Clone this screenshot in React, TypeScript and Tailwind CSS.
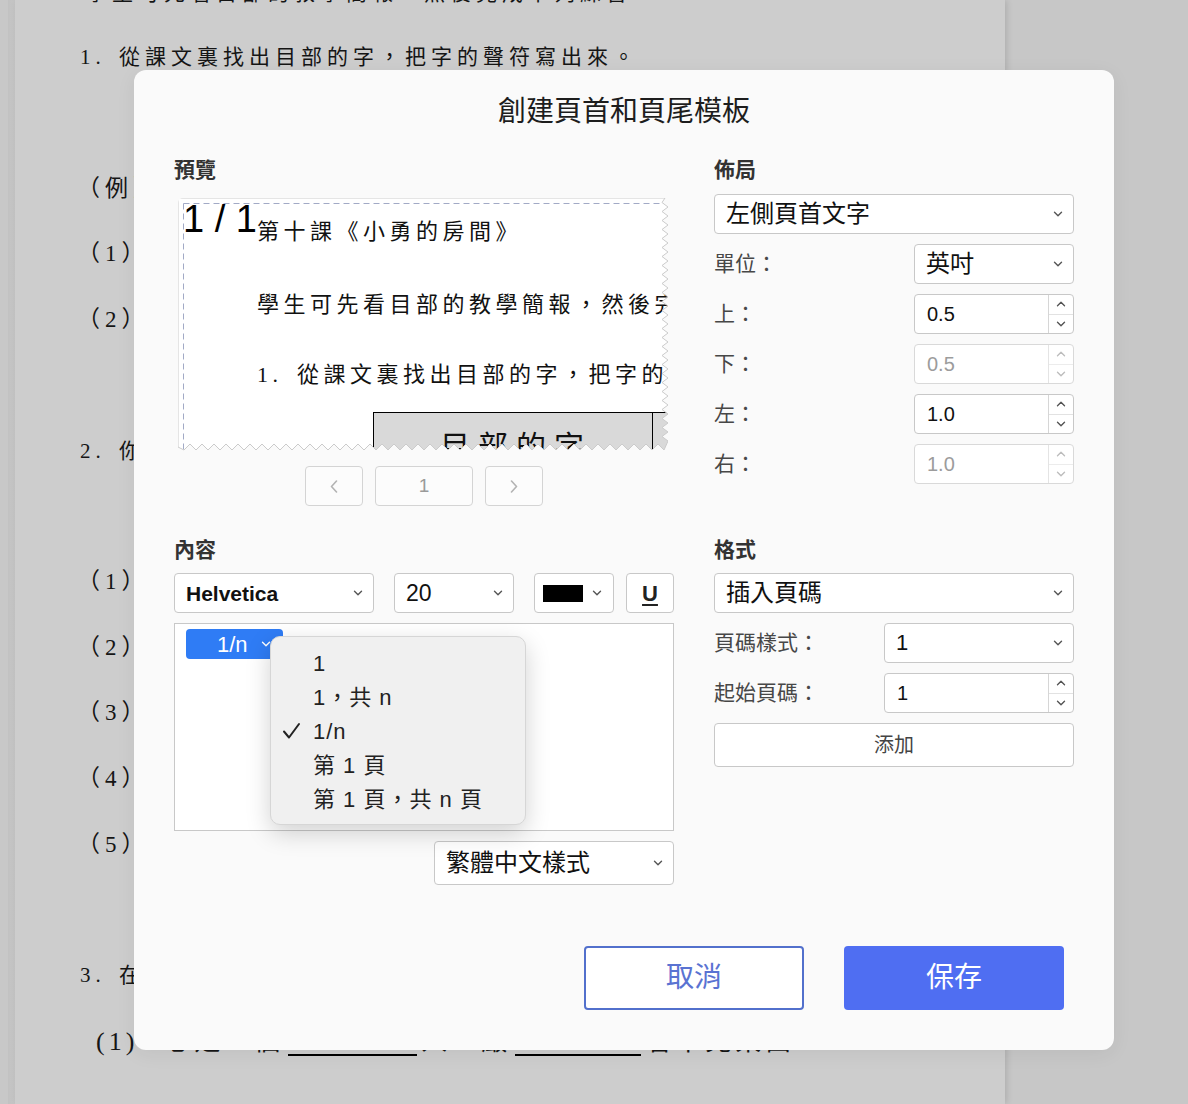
import React from 'react';

const UI = "font-['Liberation_Sans','Noto_Sans_CJK_TC',sans-serif]";
const SERIF = "font-['Liberation_Serif','Noto_Sans_CJK_TC',serif]";

const ChevronDown = ({ className = 'text-[#555]' }: { className?: string }) => (
  <svg width="10" height="6" viewBox="0 0 10 6" className={className}>
    <path d="M1.5 1.2 5 4.7l3.5-3.5" fill="none" stroke="currentColor" strokeWidth="1.4" strokeLinecap="round" strokeLinejoin="round" />
  </svg>
);

const ChevronUp = ({ className = 'text-[#555]' }: { className?: string }) => (
  <svg width="10" height="6" viewBox="0 0 10 6" className={className}>
    <path d="M1.5 4.8 5 1.3l3.5 3.5" fill="none" stroke="currentColor" strokeWidth="1.4" strokeLinecap="round" strokeLinejoin="round" />
  </svg>
);

const Select = ({ value, className = '', text = 'text-[24px]' }: { value: React.ReactNode; className?: string; text?: string }) => (
  <div className={`flex h-[40px] items-center justify-between rounded-[4px] border border-[#c8c8c8] bg-white pl-[11px] pr-[10px] ${className}`}>
    <span className={`${text} leading-none text-[#111]`}>{value}</span>
    <ChevronDown />
  </div>
);

const NumberField = ({ value, disabled = false, className = '' }: { value: string; disabled?: boolean; className?: string }) => (
  <div className={`flex h-[40px] overflow-hidden rounded-[4px] border bg-white ${disabled ? 'border-[#d9d9d9]' : 'border-[#c8c8c8]'} ${className}`}>
    <span className={`flex flex-1 items-center pl-[12px] text-[20px] ${disabled ? 'text-[#9c9c9c]' : 'text-[#111]'}`}>{value}</span>
    <div className={`flex w-[25px] flex-col border-l ${disabled ? 'border-[#e4e4e4]' : 'border-[#d6d6d6]'}`}>
      <div className="flex flex-1 items-center justify-center">
        <ChevronUp className={disabled ? 'text-[#bdbdbd]' : 'text-[#555]'} />
      </div>
      <div className={`flex flex-1 items-center justify-center border-t ${disabled ? 'border-[#ececec]' : 'border-[#e2e2e2]'}`}>
        <ChevronDown className={disabled ? 'text-[#bdbdbd]' : 'text-[#555]'} />
      </div>
    </div>
  </div>
);

const Row = ({ label, children }: { label: string; children: React.ReactNode }) => (
  <div className="mt-[10px] flex items-center justify-between">
    <span className="text-[21px] text-[#474747]">{label}</span>
    {children}
  </div>
);

const SectionLabel = ({ children }: { children: React.ReactNode }) => (
  <div className="h-[28px] text-[21px] font-semibold leading-[28px] text-[#333]">{children}</div>
);

// torn-paper edges of the preview page
const PW = 490;
const PH = 254;
const pagePoly = (() => {
  const pts: string[] = ['0,0', `${PW - 3},0`];
  let k = 1;
  for (let y = 4.5; y < PH - 10; y += 4.5, k++) pts.push(`${k % 2 ? PW - 6 : PW},${y}`);
  k = 0;
  for (let x = PW - 4; x > 0; x -= 6, k++) pts.push(`${x},${k % 2 ? PH - 8 : PH - 2}`);
  pts.push(`0,${PH - 5}`);
  return pts.join(' ');
})();

const PagePreview = () => (
  <div className={`relative ml-[4px] mt-[14px] h-[254px] w-[490px] overflow-hidden rounded-tl-[5px] bg-white ${SERIF}`}>
    <div className="absolute left-[5px] top-[2px] font-['Liberation_Sans',sans-serif] text-[38px] leading-none text-black">1 / 1</div>
    <div className="pl-[79px] pt-[20px] text-[22px] leading-[28px] tracking-[4.5px] whitespace-nowrap text-[#111]">
      <div>第十課《小勇的房間》</div>
      <div className="mt-[45px]">學生可先看目部的教學簡報，然後完成下列練習</div>
      <div className="mt-[42px]">
        <span className="inline-block w-[40px]">1.</span>從課文裏找出目部的字，把字的聲符寫出來
      </div>
      <div className="ml-[116px] mt-[23px] flex h-[60px] w-[480px] border-l border-t border-black bg-[#d9d9d9]">
        <div className="w-[279px] shrink-0 border-r border-black pl-[66px] pt-[19px] text-[30px] leading-[30px] tracking-[8px]">目部的字</div>
        <div className="w-[200px] shrink-0" />
      </div>
    </div>
    <svg className="absolute inset-0" width={PW} height={PH} viewBox={`0 0 ${PW} ${PH}`}>
      <path d={`M5.5 5.5H${PW}M5.5 5.5V${PH}`} stroke="#a2aac6" strokeWidth="1" strokeDasharray="6 4" fill="none" />
      <path d={`M0 0H${PW}V${PH}H0Z M${pagePoly.split(' ').join(' L')}Z`} fillRule="evenodd" fill="#fafafa" />
      <polygon points={pagePoly} fill="none" stroke="#cbcbcb" strokeWidth="1" />
    </svg>
  </div>
);

const PagerButton = ({ children, className = '' }: { children: React.ReactNode; className?: string }) => (
  <div className={`flex h-[40px] items-center justify-center rounded-[4px] border border-[#d4d4d4] bg-[#fcfcfc] text-[19px] text-[#9a9a9a] ${className}`}>
    {children}
  </div>
);

const formats = ['1', '1，共 n', '1/n', '第 1 頁', '第 1 頁，共 n 頁'];

const DocLine = ({ children, className = '' }: { children?: React.ReactNode; className?: string }) => (
  <div className={`flex h-[65.6px] items-center whitespace-nowrap ${className}`}>{children}</div>
);

const Num = ({ children }: { children: React.ReactNode }) => <span className="inline-block w-[39px]">{children}</span>;

const Blank = ({ w }: { w: string }) => <span className={`mx-[4px] inline-block h-[28px] border-b-2 border-black align-baseline ${w}`} />;

export default function App() {
  return (
    <div className={`relative flex h-[1104px] w-[1188px] overflow-hidden bg-[#c7c7c7] ${UI}`}>
      <div className="w-[8px] shrink-0 bg-[#c8c8c8]" />
      <div className="w-[7px] shrink-0 bg-gradient-to-r from-[#c2c2c2] to-[#c6c6c6]" />

      {/* worksheet page behind the dialog */}
      <div className={`w-[990px] shrink-0 bg-[#cdcdcd] pl-[65px] text-[21px] tracking-[5px] text-[#151515] shadow-[2px_0_6px_rgba(0,0,0,0.12)] ${SERIF}`}>
        <div className="-mt-[37px]">
          <DocLine className="!h-[62px] pl-[6px]">學生可先看目部的教學簡報，然後完成下列練習。</DocLine>
          <DocLine><Num>1.</Num>從課文裏找出目部的字，把字的聲符寫出來。</DocLine>
          <DocLine />
          <DocLine className="-ml-[3px] text-[23px]">（例）眼：艮</DocLine>
          <DocLine className="-ml-[3px] text-[23px]">（1）</DocLine>
          <DocLine className="-ml-[3px] text-[23px]">（2）</DocLine>
          <DocLine />
          <DocLine><Num>2.</Num>你能分辨下列的字嗎？</DocLine>
          <DocLine />
          <DocLine className="-ml-[3px] text-[23px]">（1）</DocLine>
          <DocLine className="-ml-[3px] text-[23px]">（2）</DocLine>
          <DocLine className="-ml-[3px] text-[23px]">（3）</DocLine>
          <DocLine className="-ml-[3px] text-[23px]">（4）</DocLine>
          <DocLine className="-ml-[3px] text-[23px]">（5）</DocLine>
          <DocLine />
          <DocLine><Num>3.</Num>在橫線上填上適當的字。</DocLine>
          <DocLine className="pl-[16px] text-[26px] tracking-[4px]">
            <span className="mr-[26px]">(1)</span>心是一個<Blank w="w-[129px]" />人，嚴<Blank w="w-[126px]" />看不見東西
          </DocLine>
        </div>
      </div>
      <div className="flex-1" />

      {/* dialog */}
      <div className="absolute left-[134px] top-[70px] h-[980px] w-[980px] rounded-[12px] bg-[#fafafa] px-[40px] shadow-[0_4px_20px_rgba(0,0,0,0.06)]">
        <div className="pt-[22px] text-center text-[28px] leading-[40px] text-[#1d1d1d]">創建頁首和頁尾模板</div>

        <div className="mt-[24px] grid grid-cols-[500px_360px] gap-x-[40px] gap-y-[30px]">
          {/* preview */}
          <div>
            <SectionLabel>預覽</SectionLabel>
            <PagePreview />
            <div className="mt-[14px] flex justify-center gap-[12px]">
              <PagerButton className="w-[58px]">
                <svg width="8" height="13" viewBox="0 0 8 13"><path d="M6.5 1 1.5 6.5l5 5.5" fill="none" stroke="#b3b3b3" strokeWidth="1.6" strokeLinecap="round" strokeLinejoin="round" /></svg>
              </PagerButton>
              <PagerButton className="w-[98px]">1</PagerButton>
              <PagerButton className="w-[58px]">
                <svg width="8" height="13" viewBox="0 0 8 13"><path d="M1.5 1l5 5.5-5 5.5" fill="none" stroke="#b3b3b3" strokeWidth="1.6" strokeLinecap="round" strokeLinejoin="round" /></svg>
              </PagerButton>
            </div>
          </div>

          {/* layout */}
          <div>
            <SectionLabel>佈局</SectionLabel>
            <Select value="左側頁首文字" className="mt-[10px]" />
            <Row label="單位：">
              <Select value="英吋" className="w-[160px]" />
            </Row>
            <Row label="上：">
              <NumberField value="0.5" className="w-[160px]" />
            </Row>
            <Row label="下：">
              <NumberField value="0.5" disabled className="w-[160px]" />
            </Row>
            <Row label="左：">
              <NumberField value="1.0" className="w-[160px]" />
            </Row>
            <Row label="右：">
              <NumberField value="1.0" disabled className="w-[160px]" />
            </Row>
          </div>

          {/* content */}
          <div>
            <SectionLabel>內容</SectionLabel>
            <div className="mt-[9px] flex">
              <Select value="Helvetica" text="text-[21px] font-semibold" className="w-[200px]" />
              <Select value="20" text="text-[23px]" className="ml-[20px] w-[120px]" />
              <div className="ml-[20px] flex h-[40px] w-[80px] items-center rounded-[4px] border border-[#c8c8c8] bg-white pl-[8px]">
                <span className="h-[17px] w-[40px] bg-black" />
                <ChevronDown className="ml-[9px] text-[#555]" />
              </div>
              <div className="ml-[12px] flex h-[40px] w-[48px] items-center justify-center rounded-[4px] border border-[#c8c8c8] bg-white text-[22px] font-semibold text-[#222] underline underline-offset-[3px]">
                U
              </div>
            </div>
            <div className="relative mt-[10px] h-[208px] border border-[#c8c8c8] bg-white">
              <div className="ml-[11px] mt-[5px] flex h-[30px] w-[97px] items-center rounded-[4px] bg-[#2f7cf5] pl-[31px] text-[22px] text-white">
                1/n
                <ChevronDown className="ml-[13px] text-white" />
              </div>
              <div className="absolute left-[95px] top-[12px] w-[256px] rounded-[10px] border border-[#d6d6d6] bg-[#f0f0f0] pb-[8px] pt-[9px] shadow-[0_8px_24px_rgba(0,0,0,0.18)]">
                {formats.map((f) => (
                  <div key={f} className="relative flex h-[34px] items-center pl-[42px] text-[22px] tracking-[1px] text-[#222]">
                    {f === '1/n' && (
                      <svg className="absolute left-[11px] top-[8px]" width="19" height="18" viewBox="0 0 19 18">
                        <path d="M2 9.5 7 15.5 17 2" fill="none" stroke="#222" strokeWidth="2" strokeLinecap="round" strokeLinejoin="round" />
                      </svg>
                    )}
                    {f}
                  </div>
                ))}
              </div>
            </div>
            <Select value="繁體中文樣式" className="ml-auto mt-[10px] h-[44px] w-[240px]" />
          </div>

          {/* format */}
          <div>
            <SectionLabel>格式</SectionLabel>
            <Select value="插入頁碼" className="mt-[9px]" />
            <Row label="頁碼樣式：">
              <Select value="1" text="text-[22px]" className="w-[190px]" />
            </Row>
            <Row label="起始頁碼：">
              <NumberField value="1" className="w-[190px]" />
            </Row>
            <div className="mt-[10px] flex h-[44px] items-center justify-center rounded-[4px] border border-[#c8c8c8] bg-white text-[20px] text-[#444]">
              添加
            </div>
          </div>
        </div>

        <div className="mt-[61px] flex justify-end gap-[40px] pr-[10px]">
          <button className="h-[64px] w-[220px] rounded-[4px] border-2 border-[#5270cc] bg-white text-[28px] text-[#5a73d2]">取消</button>
          <button className="h-[64px] w-[220px] rounded-[4px] bg-[#4f6ef2] text-[28px] text-white">保存</button>
        </div>
      </div>
    </div>
  );
}
